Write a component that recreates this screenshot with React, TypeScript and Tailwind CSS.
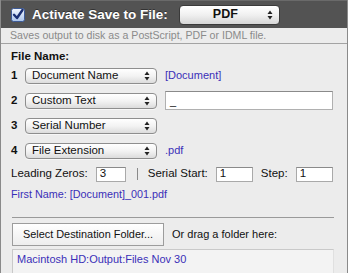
import React from "react";

const Arrows = () => (
  <svg width="6" height="10" viewBox="0 0 6 10" className="shrink-0">
    <path d="M3 0.5 L5.5 4 L0.5 4 Z" fill="#222" />
    <path d="M3 9.5 L5.5 6 L0.5 6 Z" fill="#222" />
  </svg>
);

const Popup = ({ label, w }: { label: string; w: string }) => (
  <div
    className={`${w} h-[16px] rounded-[4px] border border-[#8e8e8e] bg-gradient-to-b from-[#ffffff] via-[#f3f3f3] to-[#dcdcdc] flex items-center pl-[6px] pr-[6px] shadow-[0_1px_0_rgba(255,255,255,0.6)]`}
  >
    <span className="flex-1 text-[11.5px] leading-none text-[#111]">{label}</span>
    <Arrows />
  </div>
);

const Field = ({ w, value }: { w: string; value: string }) => (
  <div
    className={`${w} h-[15px] bg-white border border-[#a9a9a9] border-t-[#8a8a8a] flex items-center pl-[3px] text-[11.5px] leading-none text-[#111]`}
  >
    {value}
  </div>
);

export default function App() {
  const purple = "text-[#3a2fb8]";
  return (
    <div className="w-[348px] h-[273px] overflow-hidden bg-[#ececec] border-x border-[#8a8a8a] font-['Liberation_Sans',Arial,sans-serif] flex flex-col">
      {/* Header */}
      <div className="h-[28px] shrink-0 bg-[#535353] flex items-center pl-[10px] border-t border-[#6a6a6a]">
        <svg width="14" height="14" viewBox="0 0 14 14" className="shrink-0">
          <defs>
            <linearGradient id="cb" x1="0" y1="0" x2="0" y2="1">
              <stop offset="0" stopColor="#f4f8ff" />
              <stop offset="1" stopColor="#a9c3ea" />
            </linearGradient>
          </defs>
          <rect x="0.5" y="0.5" width="13" height="13" rx="2" fill="url(#cb)" stroke="#3d5a96" />
          <path d="M3 6.8 L6 10 L11.5 2" fill="none" stroke="#1a2f73" strokeWidth="2.4" strokeLinecap="round" strokeLinejoin="round" />
        </svg>
        <span className="ml-[7px] text-[13.5px] font-bold text-white leading-none [text-shadow:0_-1px_0_rgba(0,0,0,0.4)]">
          Activate Save to File:
        </span>
        <div className="ml-[11px] w-[101px] h-[20px] rounded-[4px] border border-[#3a3a3a] bg-gradient-to-b from-[#ffffff] via-[#f0f0f0] to-[#d6d6d6] flex items-center pr-[6px]">
          <span className="flex-1 text-center text-[12.5px] font-bold text-[#111] leading-none pl-[4px]">PDF</span>
          <Arrows />
        </div>
      </div>

      {/* Description */}
      <div className="h-[16px] shrink-0 border-b border-[#a3a3a3] pl-[9px] flex items-center text-[10.6px] text-[#8a8a8a] leading-none">
        Saves output to disk as a PostScript, PDF or IDML file.
      </div>

      {/* File Name */}
      <div className="mt-[6px] pl-[10px] h-[13px] leading-[13px] text-[11.5px] font-bold text-[#111]">File Name:</div>

      <div className="flex flex-col">
        <div className="h-[25px] flex items-center pl-[10px]">
          <span className="w-[14px] text-[11.5px] font-bold text-[#111]">1</span>
          <Popup label="Document Name" w="w-[132px]" />
          <span className={`ml-[8px] text-[11px] ${purple}`}>[Document]</span>
        </div>
        <div className="h-[25px] flex items-center pl-[10px]">
          <span className="w-[14px] text-[11.5px] font-bold text-[#111]">2</span>
          <Popup label="Custom Text" w="w-[132px]" />
          <div className="ml-[8px] w-[168px] h-[19px] bg-white border border-[#b0b0b0] border-t-[#8a8a8a] flex items-end pl-[4px] pb-[2px] text-[11px] text-[#111] leading-none">
            _
          </div>
        </div>
        <div className="h-[25px] flex items-center pl-[10px]">
          <span className="w-[14px] text-[11.5px] font-bold text-[#111]">3</span>
          <Popup label="Serial Number" w="w-[132px]" />
        </div>
        <div className="h-[25px] flex items-center pl-[10px]">
          <span className="w-[14px] text-[11.5px] font-bold text-[#111]">4</span>
          <Popup label="File Extension" w="w-[132px]" />
          <span className={`ml-[8px] text-[11px] ${purple}`}>.pdf</span>
        </div>
      </div>

      {/* Leading zeros row */}
      <div className="h-[22px] flex items-center pl-[10px] text-[11.5px] text-[#111]">
        <span>Leading Zeros:</span>
        <div className="ml-[8px]">
          <Field w="w-[30px]" value="3" />
        </div>
        <div className="ml-[11px] w-px h-[12px] bg-[#8a8a8a]" />
        <span className="ml-[10px]">Serial Start:</span>
        <div className="ml-[8px]">
          <Field w="w-[37px]" value="1" />
        </div>
        <span className="ml-[8px]">Step:</span>
        <div className="ml-[8px]">
          <Field w="w-[37px]" value="1" />
        </div>
      </div>

      <div className={`mt-[3px] pl-[10px] h-[13px] leading-[13px] text-[10.8px] ${purple}`}>
        First Name: [Document]_001.pdf
      </div>

      {/* Separator */}
      <div className="mt-[16px] ml-[11px] w-[322px] border-t border-[#9a9a9a]" />

      {/* Destination */}
      <div className="mt-[5px] pl-[11px] flex items-center">
        <div className="w-[152px] h-[23px] border border-[#9c9c9c] bg-gradient-to-b from-[#ffffff] to-[#ededed] flex items-center justify-center text-[10.9px] text-[#111] leading-none">
          Select Destination Folder...
        </div>
        <span className="ml-[8px] text-[11px] text-[#111]">Or drag a folder here:</span>
      </div>

      <div className="mt-[3px] ml-[11px] w-[322px] flex-1 bg-[#f3f3f3] border-t border-l border-[#c9c9c9] border-r border-r-[#e0e0e0] pl-[4px] pt-[3px] text-[11px] leading-[13px]">
        <span className={purple}>Macintosh HD:Output:Files Nov 30</span>
      </div>
    </div>
  );
}
